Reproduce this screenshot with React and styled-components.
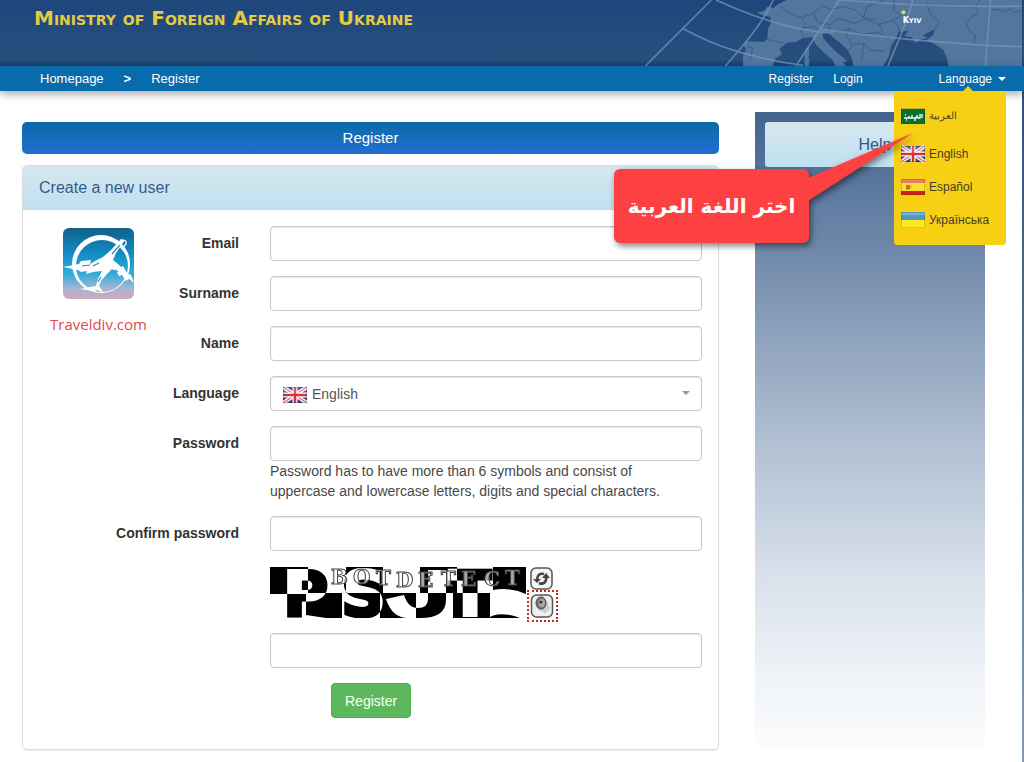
import React, { Component } from 'react';

import styled, { createGlobalStyle } from 'styled-components';

const GlobalStyle = createGlobalStyle`
    * {
        box-sizing: border-box;
    }
    body {
        margin: 0;
        background: #fff;
        color: #333;
        font-family: "Liberation Sans", Arial, sans-serif;
        font-size: 14px;
        line-height: 20px;
    }
`;

const Page = styled.div`
    display: flex;
    flex-direction: column;
    min-height: 100vh;
`;

const Header = styled.header`
    display: flex;
    justify-content: space-between;
    height: 66px;
    padding-right: 2px;
    overflow: hidden;
    background: linear-gradient(#1f467b, #274f7e 90%, #203f69);
`;

const Brand = styled.h1`
    margin: 8px 0 0 34px;
    color: #e3cb45;
    font-family: "DejaVu Sans", sans-serif;
    font-size: 20px;
    font-weight: bold;
    font-variant: small-caps;
    line-height: 20px;
    white-space: nowrap;
`;

const MapArt = styled.svg`
    flex: none;
    width: 422px;
    height: 66px;
`;

const Nav = styled.nav`
    position: relative;
    z-index: 2;
    display: flex;
    justify-content: space-between;
    align-items: center;
    height: 25px;
    padding: 0 18px 0 40px;
    background: #086bab;
    box-shadow: 0 3px 8px rgba(0, 0, 0, 0.35);
`;

const NavGroup = styled.div`
    display: flex;
    align-items: center;
    gap: 20px;
    font-size: ${props => props.$size};
`;

const NavLink = styled.a`
    color: #fff;
    text-decoration: none;
`;

const Separator = styled.span`
    color: #fff;
    font-weight: bold;
`;

const LanguageArea = styled.div`
    position: relative;
    margin-left: 56px;
`;

const LanguageToggle = styled.button`
    display: flex;
    align-items: center;
    gap: 6px;
    padding: 0;
    border: 0;
    background: none;
    color: #fff;
    font: inherit;
    cursor: pointer;
`;

const Caret = styled.span`
    border: 4px solid transparent;
    border-top-color: ${props => props.color};
    border-bottom: 0;
`;

const Menu = styled.ul`
    position: absolute;
    top: 22px;
    right: 0;
    width: 112px;
    height: 154px;
    margin: 0;
    padding: 9px 7px;
    border-radius: 4px;
    background: #f7d013;
    list-style: none;
    &::before {
        content: "";
        position: absolute;
        top: -5px;
        left: 68px;
        border: 6px solid transparent;
        border-top: 0;
        border-bottom-color: #f7d013;
    }
`;

const MenuItem = styled.li`
    height: ${props => props.$arabic ? '38px' : '33px'};
    a {
        display: flex;
        gap: 4px;
        height: 33px;
        align-items: center;
        color: #443e28;
        font-size: ${props => props.$arabic ? '10px' : '12px'};
        text-decoration: none;
    }
`;

const FlagArt = styled.svg`
    flex: none;
    display: block;
    width: 24px;
    height: 18px;
`;

const Callout = styled.div`
    position: absolute;
    top: 100px;
    right: 197px;
    display: flex;
    align-items: center;
    justify-content: center;
    width: 195px;
    height: 74px;
    border-radius: 6px;
    background: #fd4142;
    color: #fff;
    font-family: "DejaVu Sans", sans-serif;
    font-size: 20px;
    font-weight: bold;
    line-height: 32px;
    white-space: nowrap;
    filter: drop-shadow(2px 3px 3px rgba(0, 0, 0, 0.5));
`;

const Pointer = styled.svg`
    position: absolute;
    left: 194px;
    top: -37px;
    width: 107px;
    height: 72px;
`;

const Main = styled.main`
    flex: 1;
    display: grid;
    grid-template-columns: minmax(0, 1fr) 230px;
    gap: 36px;
    align-items: start;
    padding: 21px 39px 12px 22px;
    background: linear-gradient(#31517d, #8799ae) right / 2px 100% no-repeat;
`;

const Content = styled.section`
    padding-top: 10px;
`;

const PageTitle = styled.h2`
    margin: 0 0 11px;
    border-radius: 5px;
    background: linear-gradient(#0b6aa8, #226fd2);
    color: #fff;
    font-size: 15px;
    font-weight: normal;
    line-height: 32px;
    text-align: center;
`;

const Panel = styled.div`
    border: 1px solid #d9dbdd;
    border-radius: 5px;
    box-shadow: 0 1px 1px rgba(0, 0, 0, 0.08);
`;

const PanelTitle = styled.h3`
    margin: 0;
    padding: 0 16px;
    border-radius: 4px 4px 0 0;
    background: linear-gradient(#d6e7ee, #bfe0f0);
    color: #335b91;
    font-size: 16px;
    font-weight: normal;
    line-height: 44px;
`;

const Form = styled.form`
    position: relative;
    display: flex;
    flex-direction: column;
    gap: 15px;
    padding: 16px 16px 31px 0;
`;

const Watermark = styled.div`
    position: absolute;
    top: 18px;
    left: 27px;
    display: flex;
    flex-direction: column;
    align-items: center;
    gap: 15px;
    color: #e04a52;
    font-family: "Open Sans", sans-serif;
    font-size: 15px;
    svg {
        width: 71px;
        height: 71px;
    }
`;

const Row = styled.div`
    display: grid;
    grid-template-columns: 216px minmax(0, 1fr);
    column-gap: 31px;
`;

const Label = styled.label`
    font-weight: bold;
    line-height: 34px;
    text-align: right;
`;

const Field = styled.div`
    grid-column: 2;
`;

const Input = styled.input`
    display: block;
    width: 100%;
    height: 35px;
    padding: 6px 12px;
    border: 1px solid #c8c8c8;
    border-radius: 4px;
    background: #fff;
    box-shadow: inset 0 1px 1px rgba(0, 0, 0, 0.1);
    font: inherit;
`;

const SelectWrap = styled.div`
    position: relative;
    select {
        padding: 0 12px 0 41px;
        appearance: none;
        color: #555;
    }
    svg {
        position: absolute;
        top: 10px;
        left: 13px;
        pointer-events: none;
    }
    ${Caret} {
        position: absolute;
        top: 15px;
        right: 12px;
        pointer-events: none;
    }
`;

const Help = styled.p`
    margin: 0;
    padding-right: 12px;
    color: #484848;
`;

const Captcha = styled.div`
    display: flex;
    align-items: flex-start;
    height: 52px;
`;

const CaptchaArt = styled.svg`
    width: 256px;
    height: 52px;
    overflow: visible;
    isolation: isolate;
    font-family: "DejaVu Sans", sans-serif;
    font-weight: bold;
    .letter {
        mix-blend-mode: difference;
        fill: #fff;
    }
`;

const CaptchaTools = styled.div`
    display: flex;
    flex-direction: column;
    gap: 1px;
    padding-left: 1px;
`;

const ToolButton = styled.button`
    display: block;
    width: 31px;
    height: ${props => props.$focused ? '32px' : '23px'};
    padding: ${props => props.$focused ? '2px 1px' : '1px 3px 0'};
    border: ${props => props.$focused ? '2px dotted #c4262c' : '0'};
    background: none;
    svg {
        display: block;
        width: 24px;
        height: 24px;
    }
`;

const Submit = styled.button`
    justify-self: start;
    height: 35px;
    margin-left: 61px;
    padding: 0 13px;
    border: 1px solid #4cae4c;
    border-radius: 4px;
    background: #5cb85c;
    color: #fff;
    font: inherit;
`;

const Sidebar = styled.aside`
    height: 635px;
    padding: 10px;
    background: linear-gradient(#41648f, #7089aa 22%, #a9b9cd 48%, #d7dfea 72%, #eef2f7 88%, #fbfcfd);
`;

const HelpTitle = styled.h3`
    margin: 0;
    padding-left: 10px;
    border-radius: 3px;
    background: linear-gradient(#d6e7ee, #bfe0f0);
    color: #2e568d;
    font-size: 16px;
    font-weight: normal;
    line-height: 45px;
    text-align: center;
`;

const flags = {
    ar: (
        <g>
            <rect x="0" y="2" width="24" height="15" fill="#08722e" />
            <path d="M3 11h5v-2M8 11h3v-3M11 11h4l1-2 1 2h2V7M21 7v4M5 13h1M13 13h2M4 8h1" fill="none" stroke="#fff" strokeWidth="1.3" />
        </g>
    ),
    en: (
        <g>
            <rect x="0" y="1" width="24" height="16" fill="#343c83" />
            <path d="M0 1l24 16M24 1L0 17" stroke="#eee" strokeWidth="4" />
            <path d="M0 1l24 16M24 1L0 17" stroke="#d5415a" strokeWidth="1" />
            <path d="M12 1v16M0 9h24" stroke="#fff" strokeWidth="5" />
            <path d="M12 1v16M0 9h24" stroke="#d3303f" strokeWidth="2.6" />
            <rect x="0" y="1" width="24" height="7" fill="#fff" opacity=".18" />
        </g>
    ),
    es: (
        <g>
            <rect x="0" y="1" width="24" height="16" fill="#f9e02c" />
            <rect x="0" y="1" width="24" height="4" fill="#ec7a65" />
            <rect x="0" y="13" width="24" height="4" fill="#cd2416" />
            <path d="M5 7h4v4l-2 1-2-1z" fill="#c9702e" />
            <path d="M10 7v4" stroke="#d9a24b" />
        </g>
    ),
    uk: (
        <g>
            <rect x="0" y="1" width="24" height="8" fill="#4c9bc6" />
            <rect x="0" y="1" width="24" height="3" fill="#76b3d2" />
            <rect x="0" y="9" width="24" height="8" fill="#fdea1e" />
        </g>
    ),
};

const Flag = ({ code }) => (
    <FlagArt viewBox="0 0 24 18" aria-hidden="true">
        {flags[code]}
        <rect x=".5" y="1.5" width="23" height="15" fill="none" stroke="#000" strokeOpacity=".15" />
    </FlagArt>
);

const EuropeMap = () => (
    <MapArt viewBox="0 0 1266 198" aria-hidden="true">
        <path
            d="M560 0L532 14 520 24 502 20 492 32 470 38 488 46 510 50 514 66 504 88 502 118 490 126 440 124 430 134 438 148 428 172 430 198H518L526 176 546 162 538 146 562 128 586 126 610 114 636 112 648 134 672 158 696 178 706 198H738L728 186 742 184 712 158 690 138 668 112 670 98 686 96 698 112 722 130 744 150 756 176 760 198H850L868 166 872 142 886 118 896 96 926 92 912 108 936 112 946 130 962 118 984 114 968 106 1004 88 1000 104 980 120 1010 136 1030 150 1040 174 1046 198H1266V0Z"
            fill="#53769f"
        />
        <path d="M616 146l10-4 2 22-6 14-8-8zM614 172l14 2-2 24h-12z" fill="#53769f" />
        <g fill="none" stroke="#34598a" strokeWidth="2.5">
            <path d="M500 118l56 12M540 18l30 22 34 12 12 22-14 20 10 18M604 52l36-12 22-24 30 12 42-8M640 40l14 28 36 6 24-18 52 14M602 84l40-4 22 14M690 74l-4 22M734 20l32 10 26 24 36 4M766 70l30-14 40 18 46-14M790 54l10-34 52-18M714 96l32-10 36 16 56-4 28 18M746 86l-6 24 16 24 36-4 14 20 50 4M756 134l-8 16M792 130l-8 52M836 74l14 24M880 60l14 18 4 18M884 0l-4 32 24 14M980 10l12 34 26 22-14 22M904 46l-24 14" />
            <path d="M1140 0l-14 18 8 22-18 10-16 22 12 24 16 12-8 26M1170 30l26-2 12 10 24-12 10 12 24-6M440 140l18 4-8 38" />
        </g>
        <path d="M334 0L136 198M520 0C488 70 430 136 376 198M718 0L588 198M938 0C926 60 890 130 864 198M1172 0L1156 198M348 0C450 46 570 92 700 100M658 88C850 112 1050 134 1266 140M246 84C350 142 460 176 610 196M718 0C890 14 1080 22 1266 18" fill="none" stroke="#7894b5" strokeWidth="5" opacity=".75" />
        <circle cx="910" cy="37" r="6" fill="#d8e04a" />
        <text x="908" y="68" fill="#fff" fontFamily="DejaVu Sans, sans-serif" fontWeight="bold" fontSize="24">K<tspan fontSize="20">YIV</tspan></text>
    </MapArt>
);

const PlaneLogo = () => (
    <svg viewBox="0 0 71 71" aria-hidden="true">
        <defs>
            <linearGradient id="sky" x1="0" y1="0" x2="0" y2="1">
                <stop offset="0" stopColor="#125f88" />
                <stop offset=".35" stopColor="#118bc4" />
                <stop offset=".65" stopColor="#32acd9" />
                <stop offset=".85" stopColor="#a5b5d2" />
                <stop offset="1" stopColor="#cfa8bd" />
            </linearGradient>
        </defs>
        <rect width="71" height="71" rx="6" fill="url(#sky)" />
        <path d="M38 7a29 29 0 1 0 .1 58A29 29 0 1 0 38 7zm1 5a26 26 0 1 1-.1 52A26 26 0 1 1 39 12z" fill="#fff" fillRule="evenodd" />
        <path d="M0 39l16-3 2-3 10-1-1 4 5-3 8-4 8-7 10-11 4 1-9 13-3 7 5 4 3 3 2-1 4 7 4 2 3 8-5-4-3 2-4-6-3 1-3-5-4-2-5 5-6 7-2 5 5 7-6-3-4 1-14-2 16-3 2-7 4-8-9 1-7 2 1-3-6 1-3-2z" fill="#fff" />
        <path d="M19 38l8-1M30 38l6-3M49 26l8-9M52 42l3 2M35 54l3-5" stroke="#2492c8" strokeWidth="1.2" />
        <path d="M61 12c4 2 2 5-1 7" fill="none" stroke="#fff" strokeWidth="1.2" />
    </svg>
);

// checkerboard with the letters inverted wherever they cross a dark cell
const CaptchaImage = () => (
    <CaptchaArt viewBox="0 0 256 52" role="img" aria-label="Captcha">
        <rect width="256" height="52" fill="#fff" />
        <path d="M0 1h38v27H0zM76 1h37v26H76zM150 1h37v26h-37zM223 1h33v27q-16-7-33-4zM36 27h36v25H56l-20-3zM110 27h36v25h-36zM183 27h37v25h-37z" />
        <g className="letter" fontSize="62" stroke="#fff" strokeWidth="3">
            <text x="13" y="50">P</text>
            <text x="71" y="50">S</text>
            <text x="179" y="50">T</text>
        </g>
        <path className="letter" d="M158 4h18v30q0 18-26 18h-12q-16 0-22-19l18-4q4 13 14 13 10 0 10-9z" />
        <path d="M219 52c6-6 21-4 31 0z" />
        <g fill="#fff" fillOpacity=".65" stroke="#444" strokeWidth="1" fontFamily="DejaVu Serif, serif" fontSize="20">
            <text x="61" y="18">B</text>
            <text x="83" y="18">O</text>
            <text x="106" y="19">T</text>
            <text x="126" y="21">D</text>
            <text x="148" y="21">E</text>
            <text x="171" y="20">T</text>
            <text x="191" y="20">E</text>
            <text x="214" y="20">C</text>
            <text x="235" y="19">T</text>
        </g>
    </CaptchaArt>
);

const RefreshIcon = () => (
    <svg viewBox="0 0 24 24" aria-hidden="true">
        <rect x="1" y="1" width="21" height="21" rx="5" fill="#f4f4f4" stroke="#555" strokeWidth="1.5" />
        <path d="M7 13c0-5 3-7 7-6M16 10c1 5-3 8-7 6" fill="none" stroke="#444" strokeWidth="2.6" />
        <path d="M3 12h8l-4 4zM12 11h8l-4-5z" fill="#444" />
    </svg>
);

const SoundIcon = () => (
    <svg viewBox="0 0 24 24" aria-hidden="true">
        <rect x="1.5" y="1" width="21" height="22" rx="5" fill="#eee" stroke="#555" strokeWidth="1.5" />
        <path d="M8 16l6 2 5-5-2-6z" fill="#ccc" />
        <ellipse cx="11" cy="9" rx="5" ry="6" fill="#777" stroke="#444" />
        <ellipse cx="12" cy="9" rx="3" ry="4" fill="#aaa" />
        <circle cx="11" cy="8" r="1.6" fill="#333" />
        <path d="M14 18c3 0 5-2 5-5" fill="none" stroke="#aaa" />
    </svg>
);

const languages = [
    { code: 'ar', name: 'العربية' },
    { code: 'en', name: 'English' },
    { code: 'es', name: 'Español' },
    { code: 'uk', name: 'Українська' },
];

const TextRow = ({ id, label, type = 'text', help }) => (
    <Row>
        <Label htmlFor={id}>{label}</Label>
        <Field>
            <Input id={id} type={type} />
            {help && <Help>{help}</Help>}
        </Field>
    </Row>
);

/**
 * Registration page
 *
 * @class App
 * @extends {Component}
 */
class App extends Component {
    constructor(props) {
        super(props);

        this.state = {
            language: 'en',
        }
    }

    changeLanguage = event => {
        this.setState({ language: event.target.value });
    }

    render() {
        const { language } = this.state;
        return (
            <Page>
                <GlobalStyle />
                <Header>
                    <Brand>Ministry of Foreign Affairs of Ukraine</Brand>
                    <EuropeMap />
                </Header>
                <Nav>
                    <NavGroup $size="13px">
                        <NavLink href="#home">Homepage</NavLink>
                        <Separator>&gt;</Separator>
                        <NavLink href="#register">Register</NavLink>
                    </NavGroup>
                    <NavGroup $size="12px">
                        <NavLink href="#register">Register</NavLink>
                        <NavLink href="#login">Login</NavLink>
                        <LanguageArea>
                            <LanguageToggle type="button">
                                Language
                                <Caret color="#fff" />
                            </LanguageToggle>
                            <Menu>
                                {
                                    languages.map(item => (
                                        <MenuItem key={item.code} $arabic={item.code === 'ar'}>
                                            <a href={`#${item.code}`}>
                                                <Flag code={item.code} />
                                                {item.name}
                                            </a>
                                        </MenuItem>
                                    ))
                                }
                            </Menu>
                            <Callout dir="rtl">
                                اختر اللغة العربية
                                <Pointer viewBox="0 0 107 72" aria-hidden="true">
                                    <path d="M0 46L105 1 0 69z" fill="#fd4142" />
                                </Pointer>
                            </Callout>
                        </LanguageArea>
                    </NavGroup>
                </Nav>
                <Main>
                    <Content>
                        <PageTitle>Register</PageTitle>
                        <Panel>
                            <PanelTitle>Create a new user</PanelTitle>
                            <Form onSubmit={event => event.preventDefault()}>
                                <TextRow id="email" label="Email" />
                                <TextRow id="surname" label="Surname" />
                                <TextRow id="name" label="Name" />
                                <Row>
                                    <Label htmlFor="language">Language</Label>
                                    <SelectWrap>
                                        <Input as="select" id="language" value={language} onChange={this.changeLanguage}>
                                            {languages.map(item => <option key={item.code} value={item.code}>{item.name}</option>)}
                                        </Input>
                                        <Flag code={language} />
                                        <Caret color="#999" />
                                    </SelectWrap>
                                </Row>
                                <TextRow
                                    id="password"
                                    label="Password"
                                    type="password"
                                    help="Password has to have more than 6 symbols and consist of uppercase and lowercase letters, digits and special characters."
                                />
                                <TextRow id="confirm" label="Confirm password" type="password" />
                                <Row>
                                    <Field>
                                        <Captcha>
                                            <CaptchaImage />
                                            <CaptchaTools>
                                                <ToolButton type="button" aria-label="Change the code"><RefreshIcon /></ToolButton>
                                                <ToolButton type="button" aria-label="Speak the code" $focused><SoundIcon /></ToolButton>
                                            </CaptchaTools>
                                        </Captcha>
                                    </Field>
                                </Row>
                                <Row>
                                    <Field>
                                        <Input type="text" aria-label="Captcha code" />
                                    </Field>
                                </Row>
                                <Row>
                                    <Field>
                                        <Submit type="submit">Register</Submit>
                                    </Field>
                                </Row>
                                <Watermark>
                                    <PlaneLogo />
                                    Traveldiv.com
                                </Watermark>
                            </Form>
                        </Panel>
                    </Content>
                    <Sidebar>
                        <HelpTitle>Help</HelpTitle>
                    </Sidebar>
                </Main>
            </Page>
        );
    }
}

export default App;
